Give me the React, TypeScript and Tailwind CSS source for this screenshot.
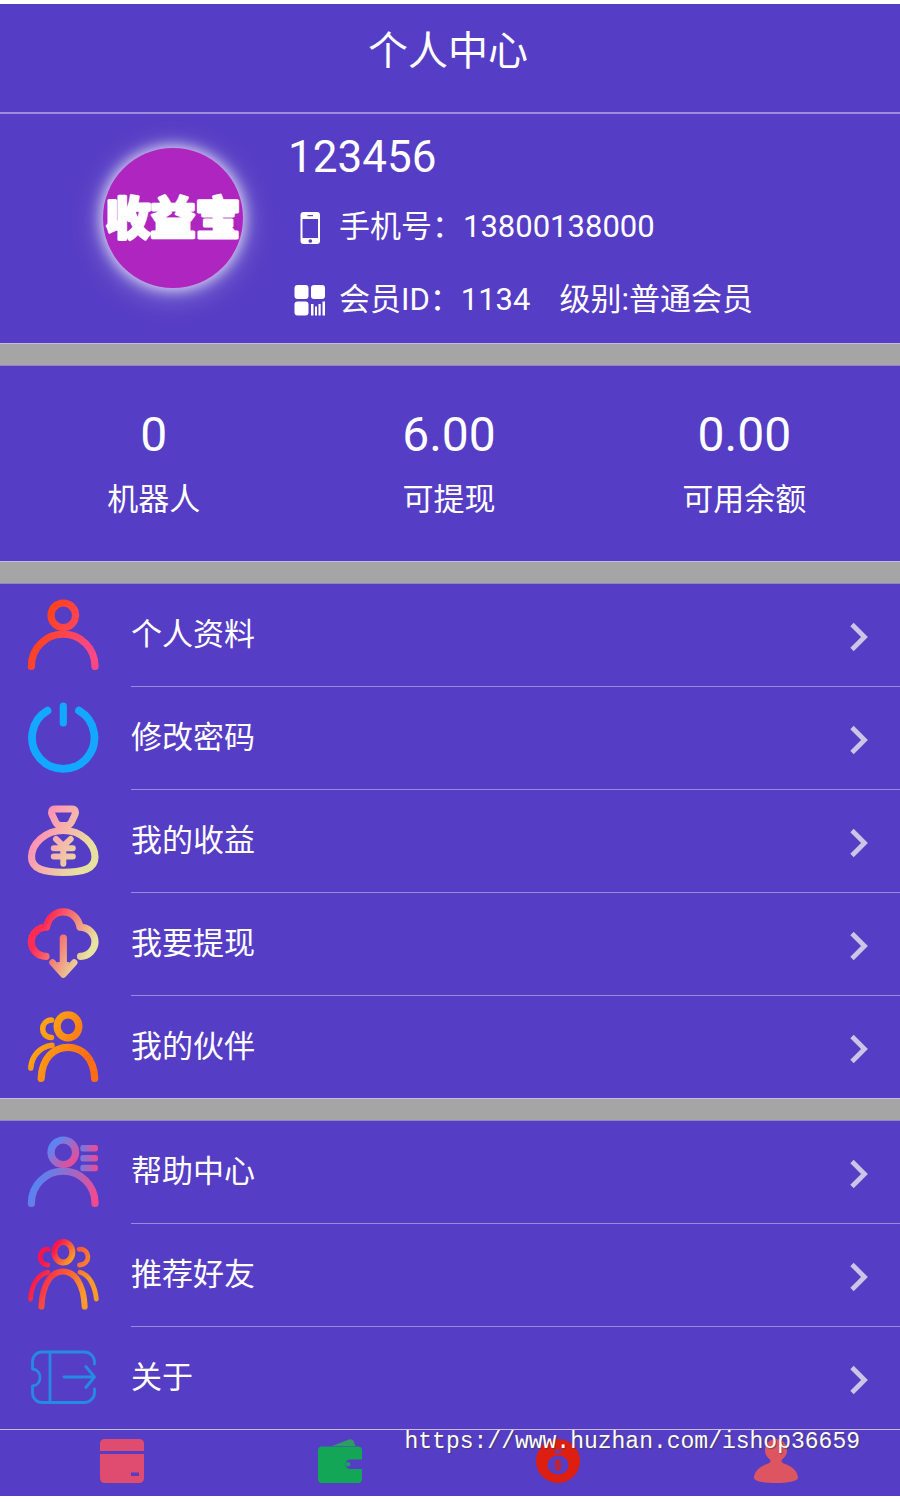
import type { ReactNode } from "react";

type IconProps = { id: string; from: string; to: string; children: ReactNode };

function GradientIcon({ id, from, to, children }: IconProps) {
  return (
    <svg
      viewBox="0 0 72 72"
      className="size-[72px] shrink-0"
      fill="none"
      stroke={`url(#${id})`}
      strokeWidth="7.2"
      strokeLinecap="round"
      strokeLinejoin="round"
      aria-hidden="true"
    >
      <defs>
        <linearGradient id={id} gradientUnits="userSpaceOnUse" x1="14" y1="24" x2="60" y2="48">
          <stop offset="0" stopColor={from} />
          <stop offset="1" stopColor={to} />
        </linearGradient>
      </defs>
      {children}
    </svg>
  );
}

const person = (
  <>
    <circle cx="36.3" cy="16.3" r="12.3" />
    <path d="M4.4 67.5V67A31.8 31.8 0 0 1 68 67v.5" />
  </>
);

const accountItems = [
  {
    label: "个人资料",
    icon: (
      <GradientIcon id="profile" from="#ff4218" to="#fb4882">
        {person}
      </GradientIcon>
    ),
  },
  {
    label: "修改密码",
    icon: (
      <GradientIcon id="power" from="#13a7ff" to="#13a7ff">
        <path strokeWidth="7.8" d="M20.5 8.7A31.2 31.2 0 1 0 52 8.7" />
        <path d="M36.3 4V21" />
      </GradientIcon>
    ),
  },
  {
    label: "我的收益",
    icon: (
      <GradientIcon id="income" from="#ff93b4" to="#e8e09f">
        <path
          strokeWidth="7"
          d="M28 4H45C48.500 4 49 7 48 9.500L44.500 17Q42.500 20.500 39.500 20.500H33.500Q30.500 20.500 28.500 17L25 9.500C24 7 24.500 4 28 4z"
        />
        <path d="M36.300 25.500C18 25.500 4.500 39 4.500 52C4.500 64 17 67.300 36.300 67.300C56 67.300 68 64 68 52C68 39 54.500 25.500 36.300 25.500z" />
        <path strokeWidth="6" d="M29 34l7.300 7L43.700 34M26.800 43.300H45.800M26.800 51.500H45.800M36.300 42V58.800" />
      </GradientIcon>
    ),
  },
  {
    label: "我要提现",
    icon: (
      <GradientIcon id="withdraw" from="#ff2c55" to="#e8e3a0">
        <path d="M19 48.300C10 48 4.300 41 4.300 34C4.300 26 10.500 19.500 19.500 19.200C21 10 28 3.800 36.300 3.800C44.500 3.800 51.500 10 53 19.200C62 19.500 68 26 68 34C68 41 62 48 53.500 48.300" />
        <path d="M36.300 30V62" />
        <path strokeWidth="6.500" d="M25.500 54.500L36.300 66.500L47.200 54.500" />
        <path stroke="none" fill="url(#withdraw)" d="M30 54L36.300 66L42.500 54z" />
      </GradientIcon>
    ),
  },
  {
    label: "我的伙伴",
    icon: (
      <GradientIcon id="partners" from="#ffa313" to="#ff6c18">
        <ellipse cx="41" cy="15.300" rx="10.900" ry="11.500" />
        <path d="M14.200 67.500C14.800 48 26 36.300 41 36.300C56 36.300 67 48 67.700 67.500" />
        <path strokeWidth="5.500" d="M24.500 9C13 9.500 12.500 26 24.500 26.500M25 34.300C12 36 4.500 46 3.800 57" />
      </GradientIcon>
    ),
  },
];

const supportItems = [
  {
    label: "帮助中心",
    icon: (
      <GradientIcon id="help" from="#5485f4" to="#c85aa8">
        <circle cx="36.3" cy="16.3" r="12.3" stroke="url(#help-head)" />
        <path stroke="url(#help-body)" d="M4.4 67.5V67A31.8 31.8 0 0 1 68 67v.5" />
        <defs>
          <linearGradient id="help-head" gradientUnits="userSpaceOnUse" x1="26" y1="8" x2="46" y2="27">
            <stop offset="0" stopColor="#5a86f4" />
            <stop offset="1" stopColor="#e84d96" />
          </linearGradient>
          <linearGradient id="help-body" gradientUnits="userSpaceOnUse" x1="12" y1="38" x2="66" y2="66">
            <stop offset="0" stopColor="#5485f4" />
            <stop offset="1" stopColor="#f24a8f" />
          </linearGradient>
          <linearGradient id="help-lines" gradientUnits="userSpaceOnUse" x1="53" y1="0" x2="70" y2="0">
            <stop offset="0" stopColor="#6d7be6" />
            <stop offset="1" stopColor="#ee4b92" />
          </linearGradient>
        </defs>
        <path fill="url(#help-lines)" stroke="none" d="M55.500 9H68.500Q71 9 71 12.300T68.500 15.600H55.500Q53.300 15.600 53.300 12.300T55.500 9zM55.500 18.900H68.500Q71 18.900 71 22.200T68.500 25.500H55.500Q53.300 25.500 53.300 22.200T55.500 18.900zM55.500 28.700H68.500Q71 28.700 71 32T68.500 35.300H55.500Q53.300 35.300 53.300 32T55.500 28.700z" />
      </GradientIcon>
    ),
  },
  {
    label: "推荐好友",
    icon: (
      <GradientIcon id="invite" from="#f5164f" to="#fb9a28">
        <ellipse stroke="url(#invite-head)" strokeWidth="6" cx="36.300" cy="13.300" rx="9" ry="10.200" />
        <defs>
          <linearGradient id="invite-head" gradientUnits="userSpaceOnUse" x1="28" y1="8" x2="45" y2="20">
            <stop offset="0" stopColor="#f5164f" />
            <stop offset="1" stopColor="#fb9a28" />
          </linearGradient>
        </defs>
        <path strokeWidth="6" d="M14.400 67.500C15.500 45 24 32.500 36.100 32.500C48 32.500 56.600 45 57.700 67.500" />
        <path
          strokeWidth="4.800"
          d="M21 10.300C11.500 9 10 25 20.700 26M52 10.300C63 9 64.500 25 52.500 26M20.700 33.300C11 35 4.500 46 3.400 60M53 33.300C62.500 36 68 47 69.300 60"
        />
      </GradientIcon>
    ),
  },
  {
    label: "关于",
    icon: (
      <GradientIcon id="about" from="#2689e2" to="#2689e2">
        <path
          strokeWidth="2.800"
          d="M67.500 22V20A10 10 0 0 0 57.500 10H15A9.500 9.500 0 0 0 5.500 19.500V27C15.500 28 15.500 43 5.500 44V51A9.500 9.500 0 0 0 15 60.500H57.500A10 10 0 0 0 67.500 50.500V47M23 10V60.500M37 35H67M58.800 24.500L67.500 35L58.800 45.500"
        />
      </GradientIcon>
    ),
  },
];

function Menu({ items }: { items: typeof accountItems }) {
  return (
    <ul>
      {items.map((item) => (
        <li key={item.label} className="group">
          <a href="#" className="flex items-start gap-8 pl-[27px]">
            <span className="flex h-[102px] items-center">{item.icon}</span>
            <span className="flex flex-1 items-center justify-between border-b border-white/40 pr-8 group-last:border-b-0">
              <span className="text-[31px] leading-[102px]">{item.label}</span>
              <svg viewBox="0 0 18 30" className="mt-1 h-[30px] w-[18px]" fill="none" stroke="#cbc5e6" strokeWidth="4.800" aria-hidden="true">
                <path d="M2 2.500L14.500 15L2 27.500" />
              </svg>
            </span>
          </a>
        </li>
      ))}
    </ul>
  );
}

function Divider() {
  return <div className="h-[23px] border-y border-t-[#c3bcdf] border-b-[#9186c0] bg-[#a5a5a5]" />;
}

const stats = [
  { value: "0", label: "机器人" },
  { value: "6.00", label: "可提现" },
  { value: "0.00", label: "可用余额" },
];

const tabs = [
  {
    name: "卡片",
    icon: (
      <>
        <path fill="#e04b70" d="M5 0H39Q44 0 44 5V12H0V5Q0 0 5 0z" />
        <path fill="#e04b70" fillRule="evenodd" d="M0 15H44V39Q44 44 39 44H5Q0 44 0 39zM31 33.500V37H39V33.500z" />
      </>
    ),
  },
  {
    name: "钱包",
    icon: (
      <>
        <path fill="#2f9d63" d="M14 7L31 .5Q34 -.5 35.500 2L37.500 7z" />
        <path
          fill="#14a657"
          d="M4 7.500H40Q44 7.500 44 11.500V20.500H31A5 5 0 0 0 31 30H44V40Q44 44 40 44H4Q0 44 0 40V11.500Q0 7.500 4 7.500z"
        />
        <circle cx="30" cy="25.300" r="2.300" fill="#14a657" />
      </>
    ),
  },
  {
    name: "收益",
    icon: (
      <>
        <circle cx="22" cy="22" r="22" fill="#dc1f10" />
        <path fill="#7a3a9c" d="M17.500 9.500L20 11.500L22 10L24 11.500L26.500 9.500L25 14.500H19z" />
        <ellipse cx="22" cy="26" rx="10.500" ry="9.500" fill="#563dc5" />
        <rect x="19" y="20.500" width="6" height="11" rx="2" fill="#c02433" />
        <path stroke="#963068" strokeWidth="1.200" d="M22 23V29" />
      </>
    ),
  },
  {
    name: "我的",
    icon: (
      <path
        fill="#dc5560"
        d="M22 0C29 0 33 5 33 12C33 16 30 19 27.500 21C27.500 23 28 24 31 25C39 27.500 44 33 44 39C43 42.500 34 44 22 44S1 42.500 0 39C0 33 5 27.500 13 25C16 24 16.500 23 16.500 21C14 19 11 16 11 12C11 5 15 0 22 0z"
      />
    ),
  },
];

export default function App() {
  return (
    <div className="bg-white pt-1 pb-1.5 font-['Roboto','Noto_Sans_CJK_SC',sans-serif] text-white">
      <main className="bg-[#563dc5]">
        <header className="border-b-2 border-[#9c8cdb] pt-7 pr-1 pb-10 text-center">
          <h1 className="text-[40px] leading-10">个人中心</h1>
        </header>

        <section className="flex items-start gap-[43px] pt-[18px] pb-[7px] pl-[103px]">
          <div className="mt-4 size-[140px] shrink-0 overflow-hidden rounded-full bg-[#ae25bf] shadow-[0_0_14px_2px_rgba(255,255,255,0.75),0_4px_30px_4px_rgba(255,255,255,0.3)]">
            <svg viewBox="0 0 140 140" className="size-full" role="img" aria-label="收益宝">
              <text
                x="70"
                y="87"
                textAnchor="middle"
                fill="#fff"
                stroke="#fff"
                strokeWidth="3"
                strokeLinejoin="round"
                className="font-['Noto_Sans_CJK_SC',sans-serif] text-[45px] font-black"
              >
                收益宝
              </text>
            </svg>
          </div>
          <div>
            <h2 className="mb-2 pl-0.5 text-[44px] leading-[50px]">123456</h2>
            <p className="flex items-center gap-[5px] text-[31px] leading-[73px]">
              <svg viewBox="0 0 48 34" className="mt-0.5 h-[34px] w-12" aria-hidden="true">
                <path
                  fill="#fff"
                  fillRule="evenodd"
                  d="M17.500 1H31Q34 1 34 4V30Q34 33 31 33H17.500Q14.500 33 14.500 30V4Q14.500 1 17.500 1zM16.500 8V27H32V8zM21.500 4V5.200H27V4zM24.300 28.200A1.800 1.800 0 1 0 24.310 28.200z"
                />
              </svg>
              <span>手机号：13800138000</span>
            </p>
            <p className="flex items-center gap-[5px] text-[31px] leading-[73px]">
              <svg viewBox="0 0 48 34" className="h-[34px] w-12" fill="#fff" aria-hidden="true">
                <rect x="8.500" y="2" width="14" height="14" rx="3" />
                <rect x="25" y="2" width="14" height="14" rx="3" />
                <rect x="8.500" y="18.500" width="14" height="14" rx="3" />
                <path d="M25 21h2.500v11.500H25zM29 23.500h2v9h-2zM32.500 21h2.200v11.500h-2.200zM36.500 18.500H39v14h-2.500z" />
              </svg>
              <span>会员ID：1134</span>
              <span className="ml-6">级别:普通会员</span>
            </p>
          </div>
        </section>

        <Divider />

        <dl className="grid grid-cols-3 pt-[41px] pr-2 pb-[38px] pl-1.5 text-center">
          {stats.map((stat) => (
            <div key={stat.label} className="flex flex-col-reverse gap-3.5">
              <dt className="text-[31px] leading-[46px]">{stat.label}</dt>
              <dd className="text-5xl leading-[56px]">{stat.value}</dd>
            </div>
          ))}
        </dl>

        <Divider />
        <Menu items={accountItems} />
        <Divider />
        <Menu items={supportItems} />

        <nav className="relative grid grid-cols-4 border-t border-[#c6bdea] pt-[9px] pr-[15px] pb-[13px] pl-[13px]">
          {tabs.map((tab) => (
            <a key={tab.name} href="#" aria-label={tab.name} className="flex justify-center">
              <svg viewBox="0 0 44 44" className="size-11" aria-hidden="true">
                {tab.icon}
              </svg>
            </a>
          ))}
          <p className="pointer-events-none absolute top-0 right-10 font-['Liberation_Mono',monospace] text-[23px] leading-6 [text-shadow:1px_1px_1px_rgba(60,60,60,0.6)]">
            https://www.huzhan.com/ishop36659
          </p>
        </nav>
      </main>
    </div>
  );
}
